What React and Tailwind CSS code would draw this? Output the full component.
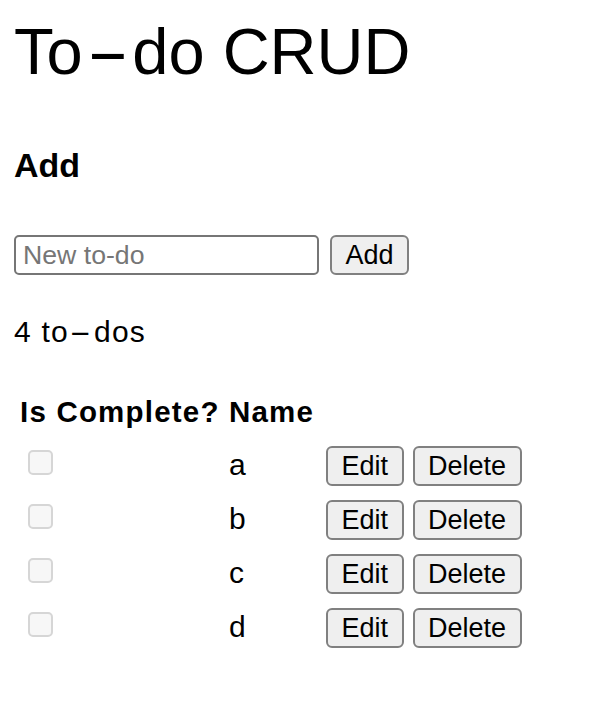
import { useState } from 'react';

const font = { fontFamily: '"Liberation Sans", Arial, sans-serif' };

const Dash = ({ className }) => (
  <span className={`inline-block ${className}`}>-</span>
);

const Button = ({ children }) => (
  <button className="h-[40px] px-[13.5px] border-2 border-[#808080] rounded-[6px] bg-[#efefef] text-[27px] leading-none text-black">
    {children}
  </button>
);

export default function App() {
  const [todos] = useState(['a', 'b', 'c', 'd']);

  return (
    <div className="min-h-screen bg-white text-black px-[14px] pt-[16px]" style={font}>
      {/* Title */}
      <h1 className="text-[65px] leading-[72px] font-normal">
        To<Dash className="mx-[14px] scale-x-[2]" />do CRUD
      </h1>

      {/* Add section */}
      <h2 className="mt-[59px] text-[34px] leading-[36px] font-bold">Add</h2>
      <div className="mt-[52px] flex items-center gap-[11px]">
        <input
          type="text"
          placeholder="New to-do"
          className="w-[305px] h-[40px] px-[7px] border-2 border-[#767676] rounded-[5px] text-[26.67px] placeholder:text-[#767676] outline-none"
        />
        <Button>Add</Button>
      </div>

      {/* Count */}
      <p className="mt-[39px] text-[30px] leading-[36px] tracking-[1.2px]">
        4 to<Dash className="mx-[7px] scale-x-[2.2]" />dos
      </p>

      {/* Table */}
      <div className="mt-[44px] flex text-[29.5px] leading-[36px] font-bold pl-[6px] tracking-[1.2px]">
        <span className="w-[209px]">Is Complete?</span>
        <span>Name</span>
      </div>

      <div className="mt-[16px] flex flex-col gap-[14px]">
        {todos.map((t) => (
          <div key={t} className="flex items-start h-[40px]">
            <div className="w-[215px] pl-[14px] pt-[4px]">
              <input
                type="checkbox"
                className="appearance-none block w-[25px] h-[25px] border-2 border-[#d6d6d6] rounded-[5px] bg-[#f7f7f7]"
              />
            </div>
            <div className="w-[97px] text-[30px] leading-[38px]">{t}</div>
            <div className="flex gap-[9px]">
              <Button>Edit</Button>
              <Button>Delete</Button>
            </div>
          </div>
        ))}
      </div>
    </div>
  );
}
